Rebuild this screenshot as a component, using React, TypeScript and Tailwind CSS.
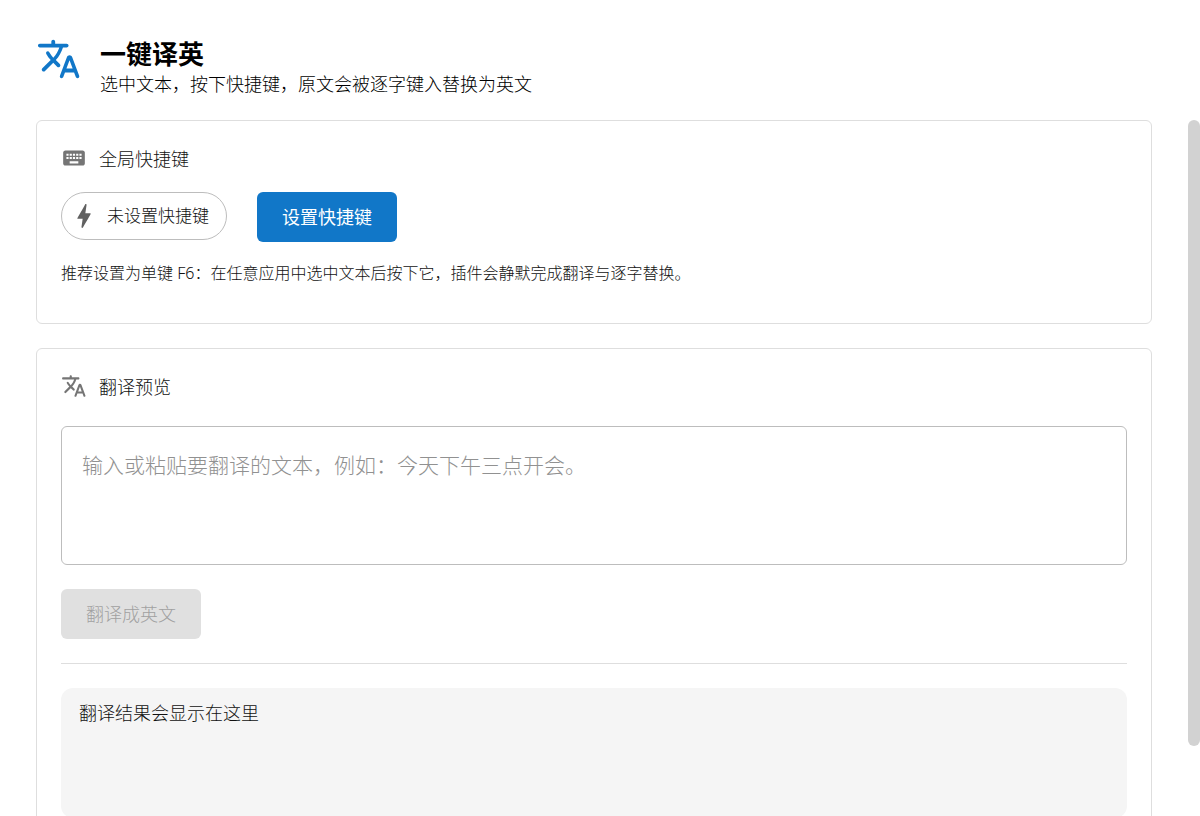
import type { ReactNode } from 'react';
import { useState } from 'react';
import { MdKeyboard } from 'react-icons/md';

type IconProps = { className: string };
type CardProps = { icon: ReactNode; title: string; children: ReactNode };

function TranslateIcon({ className }: IconProps) {
  return (
    <svg viewBox="0 0 24 24" fill="currentColor" className={className} aria-hidden="true">
      <path d="M12.65 15.67c.14-.36.05-.77-.23-1.05l-2.09-2.06.03-.03c1.74-1.94 2.98-4.17 3.71-6.53h1.94c.54 0 .99-.45.99-.99v-.02c0-.54-.45-.99-.99-.99H10V3c0-.55-.45-1-1-1s-1 .45-1 1v1H1.99c-.54 0-.99.45-.99.99 0 .55.45.99.99.99h10.18C11.5 7.92 10.44 9.75 9 11.35c-.81-.89-1.49-1.86-2.06-2.88-.16-.29-.45-.47-.78-.47-.69 0-1.13.75-.79 1.35.63 1.13 1.4 2.21 2.3 3.21L3.3 16.87c-.4.39-.4 1.03 0 1.42.39.39 1.02.39 1.42 0L9 14l2.02 2.02c.51.51 1.38.32 1.63-.35zM17.5 10c-.6 0-1.14.37-1.35.94l-3.67 9.8c-.24.61.22 1.26.87 1.26.39 0 .74-.24.88-.61l.89-2.39h4.75l.9 2.39c.14.36.49.61.88.61.65 0 1.11-.65.88-1.26l-3.67-9.8c-.22-.57-.76-.94-1.36-.94zm-1.62 7 1.62-4.33L19.12 17h-3.24z" />
    </svg>
  );
}

function BoltIcon({ className }: IconProps) {
  return (
    <svg viewBox="0 0 24 24" fill="currentColor" className={className} aria-hidden="true">
      <path d="M10.67 21c-.35 0-.62-.31-.57-.66L11 14H7.5c-.88 0-.33-.75-.31-.78 1.26-2.23 3.15-5.53 5.65-9.93.1-.18.3-.29.5-.29.35 0 .62.31.57.66L13.01 10h3.51c.4 0 .62.19.4.66-3.29 5.74-5.2 9.09-5.75 10.05-.1.18-.29.29-.5.29z" />
    </svg>
  );
}

function Card({ icon, title, children }: CardProps) {
  return (
    <section className="rounded-md border border-[#dedede] px-6 pt-6 pb-[38px]">
      <h2 className="flex items-start gap-3 text-[18px] leading-7">
        <span className="size-[26px] shrink-0 text-[#757575]">{icon}</span>
        {title}
      </h2>
      {children}
    </section>
  );
}

export default function App() {
  const [text, setText] = useState('');
  const disabled = text.trim() === '';

  return (
    <div className="flex h-screen flex-col overflow-hidden bg-white font-['Noto_Sans','Noto_Sans_CJK_SC',sans-serif] font-light text-[#111111]">
      <header className="flex gap-[18px] px-9 pt-9 pb-6 text-black">
        <TranslateIcon className="size-[46px] shrink-0 text-[#1177c8]" />
        <div>
          <h1 className="text-[26px] leading-9 font-bold">一键译英</h1>
          <p className="text-[18px] leading-6">选中文本，按下快捷键，原文会被逐字键入替换为英文</p>
        </div>
      </header>

      <div className="flex min-h-0 flex-1">
        <main className="flex min-w-0 flex-1 flex-col gap-6 px-9">
          <Card icon={<MdKeyboard className="size-full" />} title="全局快捷键">
            <div className="mt-[19px] flex items-start gap-[30px]">
              <span className="flex h-12 items-center gap-[7px] rounded-full border border-[#bdbdbd] pr-[17px] pl-[6px] text-[17px]">
                <BoltIcon className="size-8 text-[#616161]" />
                未设置快捷键
              </span>
              <button type="button" className="h-[50px] w-[140px] rounded-md bg-[#1177c8] text-[18px] font-normal text-white">
                设置快捷键
              </button>
            </div>
            <p className="mt-[19px] text-[16px] leading-6">
              推荐设置为单键 F6：在任意应用中选中文本后按下它，插件会静默完成翻译与逐字替换。
            </p>
          </Card>

          <Card icon={<TranslateIcon className="size-full" />} title="翻译预览">
            <textarea
              aria-label="翻译文本"
              placeholder="输入或粘贴要翻译的文本，例如：今天下午三点开会。"
              value={text}
              onChange={e => setText(e.target.value)}
              className="mt-[25px] block h-[139px] w-full resize-none rounded-md border border-[#bdbdbd] px-5 py-6 text-[21px] leading-7 placeholder:text-[#919191]"
            />
            <button
              type="button"
              disabled={disabled}
              className="mt-6 block h-[50px] w-[140px] rounded-md bg-[#1177c8] text-[18px] text-white disabled:bg-[#e0e0e0] disabled:text-[#a0a0a0]"
            >
              翻译成英文
            </button>
            <hr className="my-6 border-[#dedede]" />
            <output className="block min-h-[130px] rounded-xl bg-[#f5f5f5] px-[18px] py-3 text-[18px] leading-[26px]">
              翻译结果会显示在这里
            </output>
          </Card>
        </main>
        <div className="w-3 shrink-0" aria-hidden="true">
          <div className="h-9/10 rounded-full bg-[#d2d2d2]" />
        </div>
      </div>
    </div>
  );
}
